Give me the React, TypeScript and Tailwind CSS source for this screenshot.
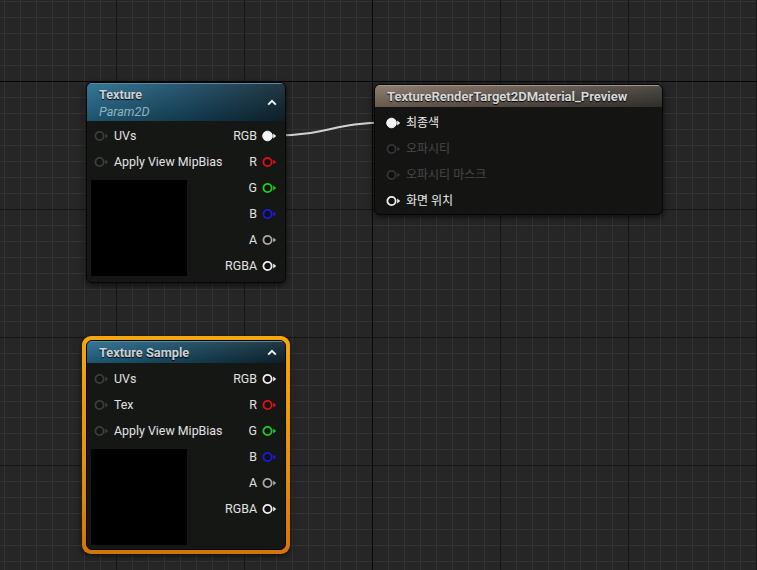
import React from "react";

type PinProps = { color: string; filled?: boolean; fill?: string };

function Pin({ color, filled, fill = "#101110" }: PinProps) {
  return (
    <svg width="16" height="12" viewBox="0 0 16 12" className="shrink-0">
      <circle
        cx="5.5"
        cy="6"
        r={filled ? 4.8 : 4.1}
        fill={filled ? color : fill}
        stroke={color}
        strokeWidth={filled ? 1 : 1.8}
      />
      <path d="M11.2 3.6 L14.2 6 L11.2 8.4 Z" fill={color} />
    </svg>
  );
}

const IN_PIN = "#3c3d3c";

function InRow({ label }: { label: string }) {
  return (
    <div className="flex h-[26px] items-center gap-[4px] pl-[3px]">
      <Pin color={IN_PIN} fill="#121312" />
      <span className="text-[12.4px] text-[#e2e2e2] whitespace-nowrap">{label}</span>
    </div>
  );
}

function OutRow({ label, color, filled }: { label: string; color: string; filled?: boolean }) {
  return (
    <div className="flex h-[26px] items-center justify-end gap-[5px]">
      <span className="text-[12.4px] text-[#e2e2e2] whitespace-nowrap">{label}</span>
      <Pin color={color} filled={filled} />
    </div>
  );
}

function Chevron() {
  return (
    <svg width="10" height="7" viewBox="0 0 10 7" className="shrink-0">
      <path d="M1.2 5.6 L5 1.8 L8.8 5.6" fill="none" stroke="#f2f2f2" strokeWidth="2" />
    </svg>
  );
}

function Preview() {
  return <div className="w-[96px] h-[96px] bg-black" />;
}

const FONT = { fontFamily: "Roboto, 'Noto Sans CJK KR', 'Noto Sans', sans-serif" } as const;

export default function App() {
  return (
    <div className="relative w-[757px] h-[570px] overflow-hidden bg-[#262626]" style={FONT}>
      {/* grid */}
      <svg className="absolute inset-0" width="757" height="570">
        <defs>
          <pattern id="minor" x="4" y="1" width="16" height="16" patternUnits="userSpaceOnUse">
            <rect x="0" y="0" width="1" height="16" fill="#333333" />
            <rect x="0" y="0" width="16" height="1" fill="#333333" />
          </pattern>
          <pattern id="major" x="116" y="81" width="128" height="128" patternUnits="userSpaceOnUse">
            <rect x="0" y="0" width="1" height="128" fill="#161616" />
            <rect x="0" y="0" width="128" height="1" fill="#161616" />
          </pattern>
        </defs>
        <rect width="757" height="570" fill="url(#minor)" />
        <rect width="757" height="570" fill="url(#major)" />
        <rect x="372" y="0" width="1" height="570" fill="#080808" />
        <rect x="0" y="81" width="757" height="1" fill="#080808" />
      </svg>

      {/* wire */}
      <svg className="absolute inset-0 pointer-events-none" width="757" height="570">
        <path
          d="M277 135.5 C 322 135.5, 338 122.5, 386 122.5"
          fill="none"
          stroke="#d2d2d2"
          strokeWidth="2"
        />
      </svg>

      {/* Node 1: Texture Param2D */}
      <div className="absolute left-[86px] top-[82px] w-[200px] rounded-[6px] border border-[#070707] bg-[#151715] shadow-[0_2px_6px_rgba(0,0,0,0.7)] overflow-hidden">
        <div className="flex h-[38px] items-center justify-between pl-[12px] pr-[8px] bg-[linear-gradient(to_bottom,rgba(255,255,255,0.08),rgba(0,0,0,0.22)),linear-gradient(to_right,#256b8e,#16455d_55%,#0f2632)] border-t border-[#5a8aa2]">
          <div className="flex flex-col leading-[17px] pt-[1px]">
            <span className="text-[12.6px] font-bold text-[#cdd2d6] [text-shadow:0_1px_1px_#000]">Texture</span>
            <span className="text-[12.6px] italic text-[#8fb1bf]">Param2D</span>
          </div>
          <Chevron />
        </div>
        <div className="flex justify-between items-start pt-[2px] pb-[3px]">
          <div className="flex flex-col pl-[4px]">
            <InRow label="UVs" />
            <InRow label="Apply View MipBias" />
            <div className="mt-[5px]">
              <Preview />
            </div>
          </div>
          <div className="flex flex-col pr-[7px]">
            <OutRow label="RGB" color="#f4f4f4" filled />
            <OutRow label="R" color="#e01010" />
            <OutRow label="G" color="#18d018" />
            <OutRow label="B" color="#1a1ae6" />
            <OutRow label="A" color="#a8a8a8" />
            <OutRow label="RGBA" color="#f0f0f0" />
          </div>
        </div>
      </div>

      {/* Node 2: Material result */}
      <div className="absolute left-[374px] top-[84px] w-[289px] rounded-[6px] border border-[#070707] bg-[#141513] shadow-[0_2px_6px_rgba(0,0,0,0.7)] overflow-hidden">
        <div className="flex h-[22px] items-center pl-[12px] bg-[linear-gradient(to_bottom,rgba(255,255,255,0.1),rgba(0,0,0,0.2)),linear-gradient(to_right,#816f61,#5e534a_50%,#3b3733)] border-t border-[#a89888]">
          <span className="text-[13px] font-bold text-[#d8d8d8] [text-shadow:0_1px_1px_#000] whitespace-nowrap">
            TextureRenderTarget2DMaterial_Preview
          </span>
        </div>
        <div className="flex flex-col pt-[3px] pl-[11px]">
          <div className="flex h-[26px] items-center gap-[4px]">
            <Pin color="#f4f4f4" filled />
            <span className="text-[12px] text-[#ececec]">최종색</span>
          </div>
          <div className="flex h-[26px] items-center gap-[4px]">
            <Pin color="#333433" fill="#0e0f0e" />
            <span className="text-[12px] text-[#474847]">오파시티</span>
          </div>
          <div className="flex h-[26px] items-center gap-[4px]">
            <Pin color="#333433" fill="#0e0f0e" />
            <span className="text-[12px] text-[#474847]">오파시티 마스크</span>
          </div>
          <div className="flex h-[26px] items-center gap-[4px]">
            <Pin color="#f0f0f0" />
            <span className="text-[12px] text-[#ececec]">화면 위치</span>
          </div>
        </div>
      </div>

      {/* Node 3: Texture Sample (selected) */}
      <div className="absolute left-[82px] top-[336px] w-[208px] rounded-[9px] p-[4px] bg-[linear-gradient(to_bottom,#f6a60f,#e4900a_60%,#d27406)] shadow-[0_2px_6px_rgba(0,0,0,0.6)]">
        <div className="rounded-[6px] border border-[#070707] bg-[#151715] overflow-hidden">
          <div className="flex h-[22px] items-center justify-between pl-[12px] pr-[8px] bg-[linear-gradient(to_bottom,rgba(255,255,255,0.08),rgba(0,0,0,0.2)),linear-gradient(to_right,#256b8e,#16455d_55%,#0f2632)] border-t border-[#5a8aa2]">
            <span className="text-[12.8px] font-bold text-[#cdd2d6] [text-shadow:0_1px_1px_#000]">Texture Sample</span>
            <Chevron />
          </div>
          <div className="flex justify-between items-start pt-[3px] pb-[4px]">
            <div className="flex flex-col pl-[4px]">
              <InRow label="UVs" />
              <InRow label="Tex" />
              <InRow label="Apply View MipBias" />
              <div className="mt-[5px]">
                <Preview />
              </div>
            </div>
            <div className="flex flex-col pr-[7px]">
              <OutRow label="RGB" color="#f0f0f0" />
              <OutRow label="R" color="#e01010" />
              <OutRow label="G" color="#18d018" />
              <OutRow label="B" color="#1a1ae6" />
              <OutRow label="A" color="#a8a8a8" />
              <OutRow label="RGBA" color="#f0f0f0" />
            </div>
          </div>
        </div>
      </div>
    </div>
  );
}
